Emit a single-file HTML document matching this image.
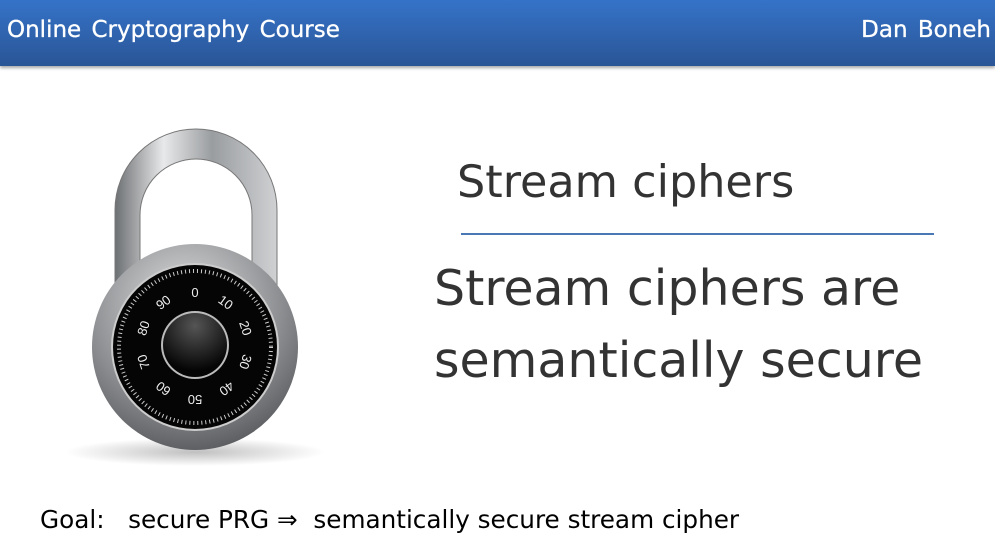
<!DOCTYPE html>
<html><head><style>
body{margin:0;width:995px;height:556px;overflow:hidden;background:#fff;font-family:"DejaVu Sans","Liberation Sans",sans-serif;position:relative}
.hd{position:absolute;left:0;top:0;width:995px;height:66px;background:linear-gradient(#3573c8,#2a5596);box-shadow:0 2px 3px rgba(0,0,0,.35)}
.hd span{position:absolute;top:17px;color:#fff;font-size:23px;word-spacing:3px;font-weight:500;-webkit-text-stroke:0.3px #fff}
.t{position:absolute;color:#333;white-space:nowrap}
</style></head><body>
<div class="hd"><span style="left:7px">Online Cryptography Course</span><span style="right:4px">Dan Boneh</span></div>
<svg style="position:absolute;left:0;top:0" width="995" height="556">
<defs>
<linearGradient id="sh" x1="0" x2="1"><stop offset="0" stop-color="#6d7073"/><stop offset=".3" stop-color="#e8e9ea"/><stop offset=".6" stop-color="#9a9da0"/><stop offset="1" stop-color="#cfd1d3"/></linearGradient>
<radialGradient id="bd" cx=".45" cy=".3" r=".8"><stop offset="0" stop-color="#e0e1e2"/><stop offset=".6" stop-color="#8a8c8f"/><stop offset="1" stop-color="#4a4c4f"/></radialGradient>
<radialGradient id="kn" cx=".5" cy=".2" r=".7"><stop offset="0" stop-color="#555"/><stop offset="1" stop-color="#050505"/></radialGradient>
<radialGradient id="sd"><stop offset="0" stop-color="#000" stop-opacity=".25"/><stop offset="1" stop-color="#000" stop-opacity="0"/></radialGradient>
</defs>
<ellipse cx="195" cy="452" rx="130" ry="14" fill="url(#sd)"/>
<path d="M115 290 V210 A81 81 0 0 1 277 210 V290 H252 V215 A56 56 0 0 0 140 215 V290Z" fill="url(#sh)" stroke="#777" stroke-width="1"/>
<circle cx="195" cy="347" r="103" fill="url(#bd)"/>
<circle cx="195" cy="347" r="84" fill="#ccc"/>
<circle cx="195" cy="347" r="82" fill="#050505"/>
<circle cx="195" cy="347" r="76" fill="none" stroke="#ccc" stroke-width="4" stroke-dasharray="1 3"/>
<g fill="#eee" font-size="13" font-family="Liberation Sans" text-anchor="middle">
<text x="195" y="297">0</text><text x="226" y="307" transform="rotate(36 226 302)">10</text>
<text x="246" y="333" transform="rotate(72 246 328)">20</text><text x="246" y="367" transform="rotate(108 246 362)">30</text>
<text x="227" y="394" transform="rotate(144 227 389)">40</text><text x="195" y="405" transform="rotate(180 195 400)">50</text>
<text x="163" y="394" transform="rotate(216 163 389)">60</text><text x="143" y="367" transform="rotate(252 143 362)">70</text>
<text x="143" y="333" transform="rotate(288 143 328)">80</text><text x="163" y="307" transform="rotate(324 163 302)">90</text>
</g>
<circle cx="195" cy="345" r="34" fill="#bbb"/>
<circle cx="195" cy="345" r="32" fill="url(#kn)"/>
<line x1="461" y1="234" x2="934" y2="234" stroke="#4a78b5" stroke-width="2"/>
</svg>
<div class="t" style="left:457px;top:157px;font-size:44.5px">Stream ciphers</div>
<div class="t" style="left:434px;top:253px;font-size:49px;line-height:72px">Stream ciphers are<br>semantically secure</div>
<div class="t" style="left:40px;top:505px;font-size:24.7px;color:#000">Goal:&nbsp;&nbsp; secure PRG ⇒&nbsp; semantically secure stream cipher</div>
</body></html>
